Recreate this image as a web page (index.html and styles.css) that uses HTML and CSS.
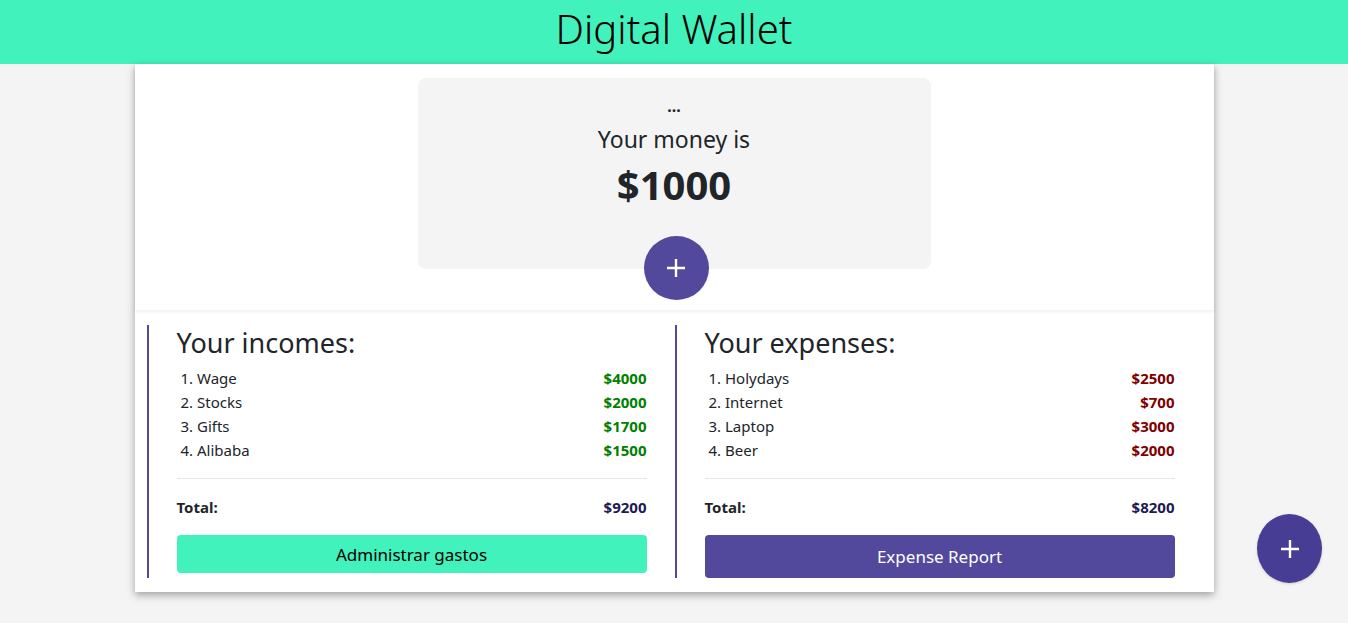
FILE: index.html
```html
<!DOCTYPE html>
<html lang="en">
<head>
<meta charset="utf-8">
<title>Digital Wallet</title>
<link rel="stylesheet" href="styles.css">
</head>
<body>
<header class="topbar">
  <h1 class="title">Digital Wallet</h1>
</header>
<main class="card">
  <section class="summary">
    <div class="balance">
      <div class="dots">...</div>
      <div class="balance-label">Your money is</div>
      <div class="balance-value">$1000</div>
      <button class="round-btn balance-add" aria-label="Add">
        <svg width="22" height="22" viewBox="0 0 22 22"><path d="M11 2v18M2 11h18" stroke="#fff" stroke-width="2.4" fill="none"/></svg>
      </button>
    </div>
  </section>
  <section class="columns">
    <div class="col">
      <h2 class="col-title">Your incomes:</h2>
      <ul class="items">
        <li class="item"><span>1. Wage</span><span class="amt income">$4000</span></li>
        <li class="item"><span>2. Stocks</span><span class="amt income">$2000</span></li>
        <li class="item"><span>3. Gifts</span><span class="amt income">$1700</span></li>
        <li class="item"><span>4. Alibaba</span><span class="amt income">$1500</span></li>
      </ul>
      <hr class="divider">
      <div class="total"><span>Total:</span><span class="total-amt">$9200</span></div>
      <button class="action action-green">Administrar gastos</button>
    </div>
    <div class="col">
      <h2 class="col-title">Your expenses:</h2>
      <ul class="items">
        <li class="item"><span>1. Holydays</span><span class="amt expense">$2500</span></li>
        <li class="item"><span>2. Internet</span><span class="amt expense">$700</span></li>
        <li class="item"><span>3. Laptop</span><span class="amt expense">$3000</span></li>
        <li class="item"><span>4. Beer</span><span class="amt expense">$2000</span></li>
      </ul>
      <hr class="divider">
      <div class="total"><span>Total:</span><span class="total-amt">$8200</span></div>
      <button class="action action-purple">Expense Report</button>
    </div>
  </section>
</main>
<button class="round-btn fab" aria-label="Add">
  <svg width="22" height="22" viewBox="0 0 22 22"><path d="M11 2v18M2 11h18" stroke="#fff" stroke-width="2.4" fill="none"/></svg>
</button>
</body>
</html>
```
FILE: styles.css
```css
* { box-sizing: border-box; }
html, body { margin: 0; padding: 0; }
body {
  background: #f4f4f4;
  font-family: "Noto Sans", "Open Sans", sans-serif;
  color: #212529;
  min-height: 623px;
}
.topbar {
  background: #41f2bc;
  height: 64px;
  display: flex;
  align-items: flex-start;
  justify-content: center;
}
.title {
  margin: 0;
  font-family: "Noto Sans", sans-serif;
  font-weight: 300;
  font-size: 40px;
  line-height: 58px;
  color: #000;
}
.card {
  width: 1079px;
  margin: 0 auto;
  background: #fff;
  box-shadow: 0 3px 8px rgba(0,0,0,0.35);
}
.summary {
  padding: 14px 0 41px;
  display: flex;
  justify-content: center;
  box-shadow: 0 2px 3px rgba(0,0,0,0.06);
  position: relative;
}
.balance {
  position: relative;
  width: 513px;
  height: 191px;
  background: #f4f4f4;
  border-radius: 8px;
  display: flex;
  flex-direction: column;
  align-items: center;
  padding-top: 20px;
}
.dots {
  font-size: 16px;
  font-weight: 700;
  line-height: 16px;
  height: 18px;
}
.balance-label {
  font-size: 23px;
  line-height: 30px;
  margin-top: 8px;
}
.balance-value {
  font-size: 40px;
  font-weight: 700;
  line-height: 48px;
  margin-top: 7px;
}
.round-btn {
  border: none;
  border-radius: 50%;
  width: 65px;
  height: 64px;
  background: #52489c;
  display: flex;
  align-items: center;
  justify-content: center;
  padding: 0;
  cursor: pointer;
}
.balance-add {
  position: absolute;
  left: 226px;
  bottom: -31px;
}
.fab {
  position: absolute;
  left: 1257px;
  top: 514px;
  width: 65px;
  height: 69px;
  background: #483d94;
  box-shadow: 0 1px 3px rgba(0,0,0,0.15);
}
.columns {
  display: flex;
  padding: 15px 11px 14px 12px;
}
.col {
  width: 528px;
  border-left: 2px solid #52489c;
  padding: 0 28px;
  display: flex;
  flex-direction: column;
  align-items: stretch;
}
.col-title {
  margin: 0;
  font-size: 27px;
  font-weight: 400;
  line-height: 36px;
}
.items {
  list-style: none;
  margin: 5px 0 0;
  padding: 0 0 0 4px;
}
.item {
  display: flex;
  justify-content: space-between;
  font-size: 15px;
  line-height: 24px;
}
.amt { font-weight: 700; }
.income { color: #008000; }
.expense { color: #800000; }
.divider {
  border: none;
  border-top: 1px solid #e5e5e5;
  margin: 16px 0 0;
}
.total {
  display: flex;
  justify-content: space-between;
  font-weight: 700;
  font-size: 15px;
  line-height: 24px;
  margin-top: 16px;
}
.total-amt { color: #1d1a55; }
.action {
  margin-top: 16px;
  border: none;
  border-radius: 4px;
  font-family: inherit;
  font-size: 17px;
  width: 100%;
}
.action-green {
  background: #41f2bc;
  color: #000;
  height: 38px;
}
.action-purple {
  background: #52489c;
  color: #fff;
  height: 43px;
}
```
